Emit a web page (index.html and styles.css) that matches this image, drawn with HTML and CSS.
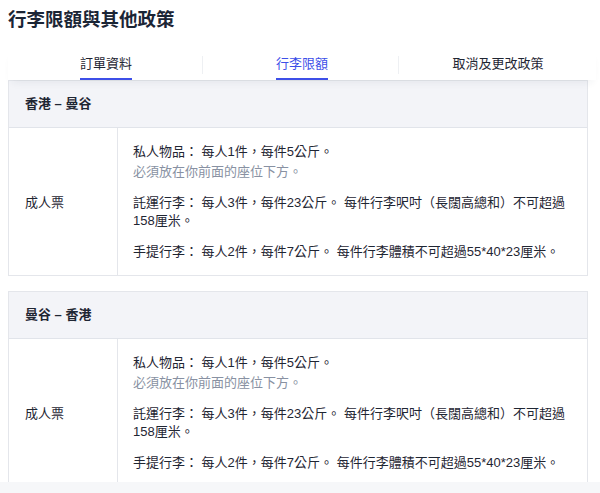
FILE: index.html
```html
<!doctype html>
<html lang="zh-Hant">
<head>
    <meta charset="UTF-8">
    <title>行李限額與其他政策</title>
    <link rel="stylesheet" href="styles.css">
</head>
<body>
<div class="page">
    <h1 class="title">行李限額與其他政策</h1>

    <div class="tabs">
        <div class="tab"><span class="tab-label hover">訂單資料</span></div>
        <div class="tab"><span class="tab-label active">行李限額</span></div>
        <div class="tab"><span class="tab-label">取消及更改政策</span></div>
    </div>

    <div class="card">
        <div class="card-hd">香港 – 曼谷</div>
        <div class="row">
            <div class="cell-type">成人票</div>
            <div class="cell-info">
                <div class="item">
                    <p>私人物品： 每人1件，每件5公斤。</p>
                    <p class="note">必須放在你前面的座位下方。</p>
                </div>
                <div class="item">
                    <p>託運行李： 每人3件，每件23公斤。 每件行李呎吋（長闊高總和）不可超過158厘米。</p>
                </div>
                <div class="item">
                    <p>手提行李： 每人2件，每件7公斤。 每件行李體積不可超過55*40*23厘米。</p>
                </div>
            </div>
        </div>
    </div>

    <div class="card">
        <div class="card-hd">曼谷 – 香港</div>
        <div class="row">
            <div class="cell-type">成人票</div>
            <div class="cell-info">
                <div class="item">
                    <p>私人物品： 每人1件，每件5公斤。</p>
                    <p class="note">必須放在你前面的座位下方。</p>
                </div>
                <div class="item">
                    <p>託運行李： 每人3件，每件23公斤。 每件行李呎吋（長闊高總和）不可超過158厘米。</p>
                </div>
                <div class="item">
                    <p>手提行李： 每人2件，每件7公斤。 每件行李體積不可超過55*40*23厘米。</p>
                </div>
            </div>
        </div>
    </div>
</div>
</body>
</html>
```

FILE: styles.css
```css
* {
    margin: 0;
    padding: 0;
    box-sizing: border-box;
}
html, body {
    height: 100%;
}
body {
    background: #f6f7f9;
    font-family: "Liberation Sans", "Noto Sans CJK TC", sans-serif;
    color: #1f2633;
}
.page {
    height: 482px;
    overflow: hidden;
    background: #fff;
    padding: 8px 12px 0 8px;
}
.title {
    font-size: 18.5px;
    line-height: 24px;
    font-weight: 700;
    color: #1b2535;
}
.tabs {
    display: flex;
    margin-top: 17px;
    margin-right: -8px;
    height: 31px;
    position: relative;
    z-index: 1;
    background: #fff;
    box-shadow: 0 6px 8px -4px rgba(40, 50, 80, 0.08);
}
.tab {
    flex: 1;
    display: flex;
    justify-content: center;
    position: relative;
}
.tab + .tab:before {
    content: '';
    position: absolute;
    left: -2px;
    top: 7px;
    height: 18px;
    border-left: 1px solid #eef0f3;
}
.tab-label {
    font-size: 13px;
    line-height: 18px;
    padding-top: 6px;
    border-bottom: 2px solid transparent;
    height: 31px;
    color: #1f2633;
}
.tab-label.hover {
    border-bottom-color: #3d4fe8;
}
.tab-label.active {
    color: #3d4fe8;
    border-bottom-color: #3d4fe8;
}
.card {
    border: 1px solid #e4e6eb;
    margin-bottom: 15px;
}
.card-hd {
    background: #f3f4f8;
    border-bottom: 1px solid #e1e4ea;
    height: 47px;
    line-height: 45px;
    padding-left: 16px;
    font-size: 13px;
    font-weight: 700;
    color: #1f2633;
}
.row {
    display: flex;
}
.cell-type {
    width: 109px;
    border-right: 1px solid #e4e6eb;
    padding-left: 16px;
    display: flex;
    align-items: center;
    font-size: 13px;
}
.cell-info {
    flex: 1;
    padding: 15px 14px 14px 15px;
    font-size: 13px;
    line-height: 18px;
}
.item + .item {
    margin-top: 13px;
}
.note {
    color: #8891a2;
    margin-top: 2px;
}
```
